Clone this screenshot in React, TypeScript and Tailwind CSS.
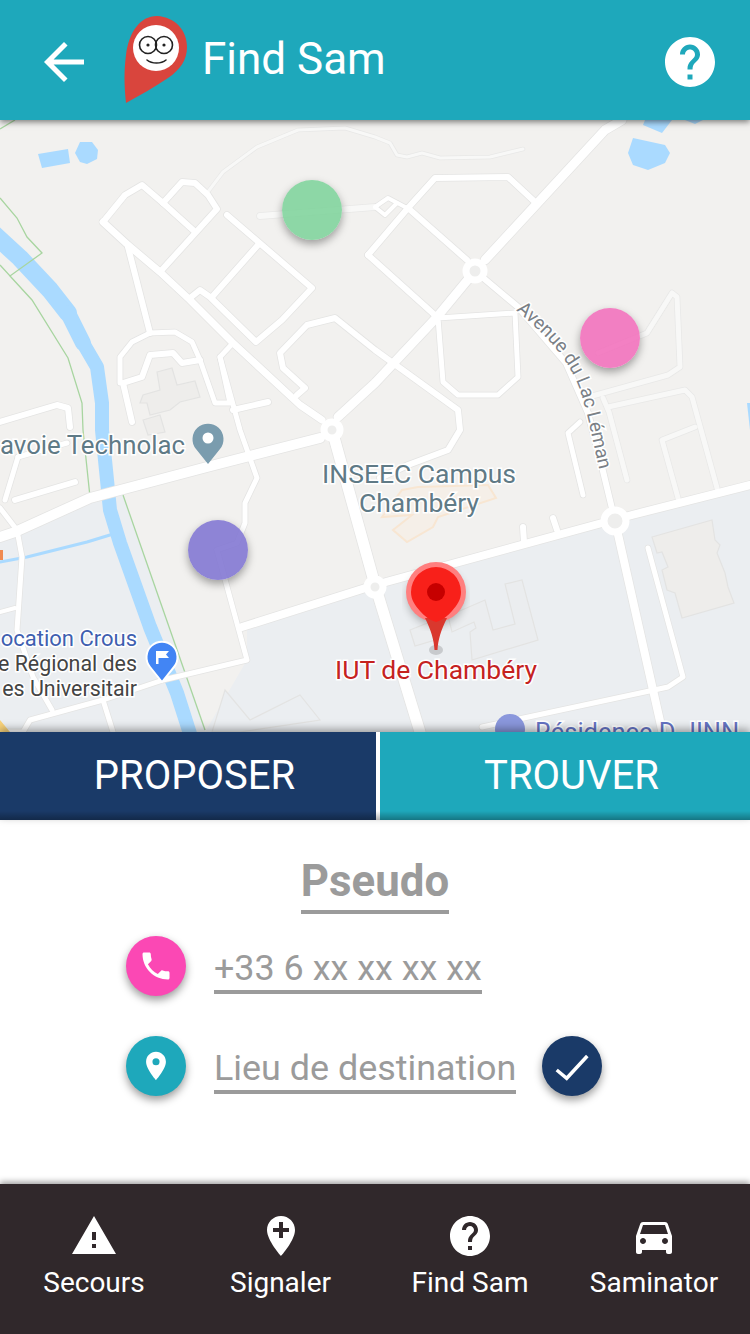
import { MdArrowBack, MdHelp, MdPhone, MdPlace, MdWarning, MdAddLocation, MdDirectionsCar } from "react-icons/md";

// routes de la carte : [points, largeur]
const roads: [string, number][] = [
  // bloc nord-ouest
  ["103,222 125,195 142,185 163,203 182,182 195,183 208,195 217,209 160,272", 6],
  ["163,203 193,230", 6],
  ["103,222 128,245 160,272 190,300 232,342 300,405 322,420", 7],
  ["227,215 312,288 282,320 256,342 210,297 200,290 190,298", 6],
  ["258,245 212,297", 6],
  ["128,247 150,333", 6],
  ["120,383 120,357 132,342 150,333 175,332 192,342 200,360 215,403 230,403 220,357 233,343", 5],
  ["200,360 182,363 173,353 150,355 142,377 123,383 132,422", 6],
  ["220,357 240,430 257,478 245,503 245,523 237,543 217,550", 5],
  ["233,410 268,402", 6],
  ["0,422 57,405 68,408 70,427", 6],
  // centre
  ["297,395 305,388 283,368 280,353 307,325 335,318 375,350 458,410 460,430 448,450 408,465 380,478", 6],
  ["368,255 408,208 435,178 508,177 535,202", 6],
  ["368,255 437,317", 6],
  ["408,208 467,260", 6],
  ["375,207 388,198 407,208", 4],
  ["375,207 385,215 397,203", 4],
  ["622,120 605,130 485,260", 9],
  ["475,271 437,317 375,383 338,417", 9],
  ["438,318 515,313 518,377 498,395 458,395 443,382 438,318", 5],
  ["475,271 518,307 566,363 588,413 602,467 615,521", 6],
  // axes principaux
  ["0,537 15,532 90,498 207,467 320,438", 10],
  ["15,500 75,482", 6],
  ["18,457 5,500", 5],
  ["18,457 67,443", 5],
  ["0,508 17,530 22,557 17,630 33,677 52,710", 5],
  ["0,612 15,608", 4],
  ["332,430 375,585 420,732", 11],
  ["0,732 23,732 30,720 103,700 163,680 247,660 217,550", 5],
  ["103,700 113,732", 5],
  ["242,627 375,585 602,523 632,515 750,485", 8],
  ["615,521 662,730", 8],
  ["648,548 683,677 668,687 482,727", 5],
  ["580,422 568,433 583,495", 5],
  ["523,527 524,542", 6],
  ["553,518 557,530", 6],
];

const lightRoads: [string, number][] = [
  ["260,216 375,207", 6],
  ["585,398 668,375 680,367 677,297 672,293 647,333 598,353", 5],
  ["603,398 609,412 627,480", 5],
  ["608,407 685,390 692,397 717,488", 5],
  ["695,427 662,440 678,498", 5],
  ["207,193 223,172 257,147 298,130 345,128 375,137 390,143 397,155 407,157 422,153 440,158 490,157 523,149", 3],
];

// [points, fond]
const buildings: [string, string][] = [
  ["157,372 172,368 177,385 195,381 200,397 180,402 170,410 150,415 147,403 140,403 143,395 160,390", "#eeedeb"],
  ["143,420 160,415 165,432 148,435", "#eeedeb"],
  ["652,537 712,520 715,540 720,545 717,553 725,573 728,587 734,603 682,618 675,593 667,590 662,570 668,567 662,552 657,553", "#eeedeb"],
  ["505,584 522,580 538,640 472,660 470,632 476,628 474,622 452,632 448,616 485,600 493,630 515,624", "#ebedef"],
  ["410,630 430,622 435,640 415,646", "#ebedef"],
  ["225,690 250,720 300,695 320,720 240,732 212,732", "#ebeef1"],
];

const labelClass = "font-['Roboto',sans-serif]";

function MapView() {
  return (
    <div className="relative h-[612px] w-full overflow-hidden bg-[#f2f1ef]">
      <svg viewBox="0 120 750 612" className="block h-full w-full">
        <defs>
          <filter id="blur"><feGaussianBlur stdDeviation="5" /></filter>
          <path id="avenue" d="M516 310 C545 335 566 355 578 385 C588 412 592 440 600 472" />
        </defs>
        {/* zones bleutées */}
        <polygon points="0,537 90,498 105,495 205,730 205,732 0,732" fill="#ebeef1" />
        <polygon points="105,495 123,495 205,730 190,732" fill="#ebeef1" />
        <polygon points="247,627 375,585 602,523 750,485 750,732 205,732 247,660" fill="#ebeef1" />
        {/* eau */}
        <polygon points="38,154 68,149 70,163 42,168" fill="#aadaff" />
        <polygon points="80,142 92,142 98,150 97,159 87,164 80,162 75,153" fill="#aadaff" />
        <polygon points="633,138 665,145 670,153 665,163 648,170 633,165 628,153" fill="#aadaff" />
        <polygon points="643,125 662,133 672,120 645,120" fill="#aadaff" />
        <polygon points="685,120 703,120 695,124" fill="#aadaff" />
        <polygon points="747,403 750,403 750,430" fill="#aadaff" />
        <g fill="none" stroke="#aadaff" strokeLinecap="round" strokeLinejoin="round">
          <polyline points="-5,235 20,258 50,290 68,313" strokeWidth="18" />
          <polyline points="68,313 83,343" strokeWidth="16" />
          <polyline points="83,343 97,367 102,403 102,430 107,480 110,510 120,543 150,627 177,693 192,740" strokeWidth="14" />
          <polyline points="0,562 27,557 87,542 110,535" strokeWidth="3" />
        </g>
        {/* limites vertes */}
        <g fill="none" stroke="#a8d5a0" strokeWidth="1.3">
          <polyline points="0,198 17,218 27,237 42,253 10,276 0,265" />
          <polyline points="10,276 32,300 68,358 82,403 83,430 90,497" />
          <polyline points="123,495 205,730" />
          <polyline points="0,129 15,120" />
        </g>
        {/* campus */}
        <path d="M382 517 L402 490 L418 487 L488 485 L496 498 L438 517 L433 527 L407 542 L393 530 L412 515 Z" fill="#f5efe8" stroke="#f8e6d2" strokeWidth="2" />
        {buildings.map(([b, fill]) => (
          <polygon key={b} points={b} fill={fill} stroke="#e3e3e2" strokeWidth="1.2" />
        ))}
        {/* routes */}
        <g fill="none" strokeLinecap="round" strokeLinejoin="round">
          {lightRoads.map(([p, w]) => (
            <polyline key={"lc" + p} points={p} stroke="#e8e8e7" strokeWidth={w + 1.5} />
          ))}
          {roads.map(([p, w]) => (
            <polyline key={"c" + p} points={p} stroke="#e4e4e3" strokeWidth={w + 1.5} />
          ))}
          {lightRoads.map(([p, w]) => (
            <polyline key={"l" + p} points={p} stroke="#f8f8f7" strokeWidth={w} />
          ))}
          {roads.map(([p, w]) => (
            <polyline key={p} points={p} stroke="#ffffff" strokeWidth={w} />
          ))}
        </g>
        {/* ronds-points */}
        {[
          [332, 430, 5],
          [475, 271, 6],
          [615, 521, 8],
          [375, 587, 5],
        ].map(([x, y, r]) => (
          <circle key={x} cx={x} cy={y} r={r + 3} fill="#eeeeed" stroke="#ffffff" strokeWidth="7" />
        ))}
        <rect x="0" y="550" width="3" height="10" fill="#f08a50" />
        <polygon points="0,720 10,732 0,732" fill="#f8d27a" />
        {/* textes */}
        <g className={labelClass} stroke="#ffffff" strokeWidth="3" style={{ paintOrder: "stroke" }}>
          <text x="185" y="454" textAnchor="end" fontSize="25.8" fill="#5f7a86">avoie Technolac</text>
          <text x="419" y="483" textAnchor="middle" fontSize="26.5" fill="#5f7a86">INSEEC Campus</text>
          <text x="419" y="512" textAnchor="middle" fontSize="26.5" fill="#5f7a86">Chambéry</text>
          <text x="137" y="646" textAnchor="end" fontSize="22" fill="#3f5fb0">ocation Crous</text>
          <text x="137" y="671" textAnchor="end" fontSize="21.4" fill="#444444">e Régional des</text>
          <text x="137" y="696" textAnchor="end" fontSize="21.4" fill="#444444">es Universitair</text>
          <text x="335" y="679" fontSize="26.5" fill="#c5221f">IUT de Chambéry</text>
          <text x="535" y="741" fontSize="25.5" fill="#6573c3">Résidence D JINN</text>
          <text fontSize="19" fill="#7a8086">
            <textPath href="#avenue">Avenue du Lac Léman</textPath>
          </text>
        </g>
        {/* repères */}
        <circle cx="510" cy="729" r="15" fill="#8a97dc" />
        <path d="M208 464 L196 449 A15.5 15.5 0 1 1 220 449 Z" fill="#7a9cae" />
        <circle cx="208" cy="438" r="5.5" fill="#ffffff" />
        <path d="M162 682 L150 667 A15.5 15.5 0 1 1 174 667 Z" fill="#4285f4" stroke="#ffffff" strokeWidth="2" />
        <path d="M156 664 V651 H169 L166 654.5 L169 658 H158.5 V664 Z" fill="#ffffff" />
        {/* marqueur IUT */}
        <ellipse cx="436" cy="650" rx="7" ry="5" fill="#000000" opacity="0.15" />
        <circle cx="436" cy="597" r="28" fill="#000000" opacity="0.3" filter="url(#blur)" />
        <circle cx="436" cy="592" r="30" fill="#ff7f7f" />
        <path d="M425 618 H447 C441 630 438 640 437.5 650 H434.5 C434 640 431 630 425 618 Z" fill="#d9382e" />
        <path d="M436 622 C430 620 424 616 420 611 C415 605 411 600 411 592 A25 25 0 0 1 461 592 C461 600 457 605 452 611 C448 616 442 620 436 622 Z" fill="#f8201a" />
        <circle cx="436" cy="592" r="9" fill="#c60000" />
      </svg>

      <div className="absolute left-[282px] top-[60px] h-[60px] w-[60px] rounded-full bg-[#82d49d]/90 shadow-[0_4px_8px_rgba(0,0,0,0.35)]" />
      <div className="absolute left-[580px] top-[188px] h-[60px] w-[60px] rounded-full bg-[#f272bd]/90 shadow-[0_4px_8px_rgba(0,0,0,0.35)]" />
      <div className="absolute left-[188px] top-[400px] h-[60px] w-[60px] rounded-full bg-[#8378d3]/90 shadow-[0_4px_8px_rgba(0,0,0,0.35)]" />
    </div>
  );
}

function Logo() {
  return (
    <svg width="66" height="90" viewBox="123 15 66 90" className="shrink-0">
      <path d="M126 103 C124 85 124 70 126 55 C129 32 140 16 157 16 C175 17 187 30 187 47 C187 60 180 70 168 78 C155 87 140 95 126 103 Z" fill="#d9453d" />
      <circle cx="156" cy="48" r="23" fill="#ffffff" />
      <g fill="none" stroke="#222222" strokeWidth="1.6">
        <circle cx="148" cy="45" r="8.5" />
        <circle cx="164" cy="45" r="8.5" />
        <path d="M147 60 C152 64 161 64 166 60" strokeLinecap="round" />
      </g>
      <circle cx="148" cy="45" r="1.6" fill="#222222" />
      <circle cx="164" cy="45" r="1.6" fill="#222222" />
    </svg>
  );
}

const navItems = [
  { label: "Secours", Icon: MdWarning },
  { label: "Signaler", Icon: MdAddLocation },
  { label: "Find Sam", Icon: MdHelp },
  { label: "Saminator", Icon: MdDirectionsCar },
];

export default function App() {
  return (
    <div className="flex h-[1334px] w-[750px] flex-col overflow-hidden bg-white font-['Roboto',sans-serif]">
      {/* Barre du haut */}
      <header className="relative z-10 flex h-[120px] shrink-0 items-start bg-[#1ea8bb] pl-[34px] pr-[30px] shadow-[0_2px_6px_rgba(0,0,0,0.5)]">
        <MdArrowBack size={60} className="mt-[32px] text-white" />
        <div className="ml-[29px] mt-[15px]">
          <Logo />
        </div>
        <span className="ml-[13px] mt-[33px] text-[44px] leading-[52px] text-white">Find Sam</span>
        <MdHelp size={60} className="ml-auto mt-[32px] text-white" />
      </header>

      <MapView />

      {/* Onglets */}
      <div className="relative z-10 flex h-[88px] shrink-0 bg-white shadow-[0_-3px_8px_rgba(0,0,0,0.35)]">
        <div className="flex w-[376px] items-center justify-center bg-[#1a3a68] pl-[13px] text-[40px] leading-none text-white">PROPOSER</div>
        <div className="ml-[4px] flex flex-1 items-center justify-center bg-[#1ea8bb] pl-[13px] text-[40px] leading-none text-white">TROUVER</div>
        <div className="absolute inset-x-0 bottom-0 h-[9px] bg-gradient-to-t from-black/30 to-transparent" />
      </div>

      {/* Formulaire */}
      <div className="flex flex-1 flex-col bg-white">
        <div className="mt-[32px] self-center border-b-4 border-[#9b9b9b] text-[43.8px] font-bold leading-[58px] text-[#9b9b9b]">Pseudo</div>
        <div className="ml-[126px] mt-[22px] flex items-start">
          <div className="flex h-[60px] w-[60px] items-center justify-center rounded-full bg-[#fb48b4] shadow-[0_4px_8px_rgba(0,0,0,0.4)]">
            <MdPhone size={36} className="text-white" />
          </div>
          <div className="ml-[28px] h-[58px] border-b-4 border-[#9b9b9b] text-[35.9px] leading-[64px] text-[#9b9b9b]">+33 6 xx xx xx xx</div>
        </div>
        <div className="ml-[126px] mt-[40px] flex items-start">
          <div className="flex h-[60px] w-[60px] items-center justify-center rounded-full bg-[#1ea8bb] shadow-[0_4px_8px_rgba(0,0,0,0.4)]">
            <MdPlace size={34} className="text-white" />
          </div>
          <div className="ml-[28px] h-[58px] border-b-4 border-[#9b9b9b] text-[35.9px] leading-[64px] text-[#9b9b9b]">Lieu de destination</div>
          <div className="ml-[26px] flex h-[60px] w-[60px] items-center justify-center rounded-full bg-[#1a3a68] shadow-[0_4px_8px_rgba(0,0,0,0.4)]">
            <svg width="60" height="60" viewBox="0 0 60 60">
              <polyline points="14.7,34 24.7,42.3 45.3,20" fill="none" stroke="#ffffff" strokeWidth="3.5" />
            </svg>
          </div>
        </div>
      </div>

      {/* Navigation */}
      <nav className="relative z-10 grid h-[150px] shrink-0 grid-cols-[188px_185px_194px_174px] bg-[#30282b] pt-[28px] shadow-[0_-2px_6px_rgba(0,0,0,0.4)]">
        {navItems.map(({ label, Icon }) => (
          <div key={label} className="flex flex-col items-center text-white">
            <Icon size={48} />
            <span className="mt-[5px] text-[28px] leading-[36px]">{label}</span>
          </div>
        ))}
      </nav>
    </div>
  );
}
